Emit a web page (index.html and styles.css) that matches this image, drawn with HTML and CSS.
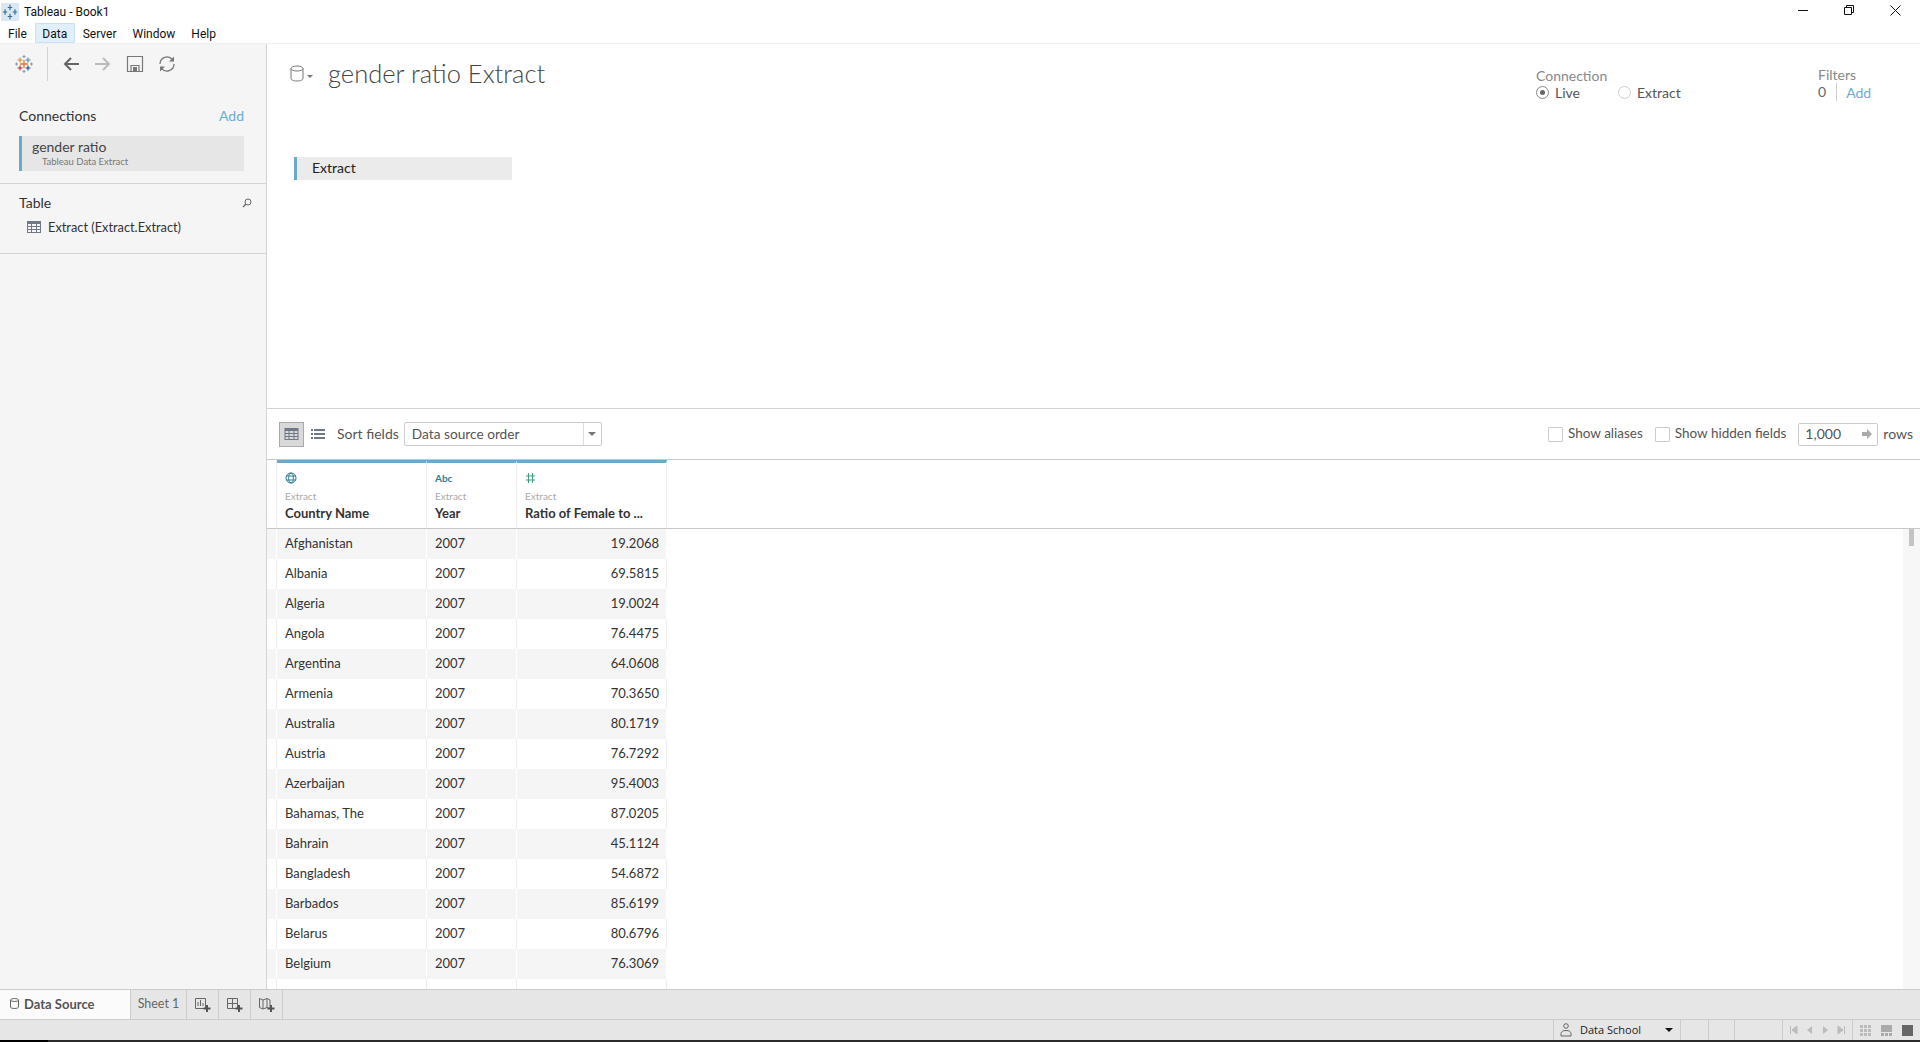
FILE: index.html
```html
<!DOCTYPE html>
<html lang="en">
<head>
<meta charset="utf-8">
<title>Tableau - Book1</title>
<link rel="stylesheet" href="styles.css">
</head>
<body>
<div class="app">
  <header class="titlebar">
    <svg class="app-icon" width="20" height="20" viewBox="0 0 20 20"><rect x="0" y="0" width="20" height="20" fill="#dbe7f1"/><path d="M10 2v6M7.500 5h5M10 12v6M7.500 15h5M4.500 7v6M2 10h5M15.500 7v6M13 10h5" stroke="#2f6f9f" stroke-width="1.300" fill="none"/></svg>
    <span class="app-title">Tableau - Book1</span>
    <div class="win-controls">
      <svg width="11" height="11" viewBox="0 0 11 11"><path d="M0 5.500h10" stroke="#111" fill="none"/></svg>
      <svg width="11" height="11" viewBox="0 0 11 11"><path d="M.5 2.500h7v7h-7zM2.500 2.500v-2h7v7h-2" stroke="#111" fill="none"/></svg>
      <svg width="11" height="11" viewBox="0 0 11 11"><path d="M.5.500l10 10M10.500.500l-10 10" stroke="#111" fill="none"/></svg>
    </div>
  </header>
  <nav class="menubar">
    <span class="menu-item">File</span>
    <span class="menu-item active">Data</span>
    <span class="menu-item">Server</span>
    <span class="menu-item">Window</span>
    <span class="menu-item">Help</span>
  </nav>
  <div class="workspace">
    <aside class="sidebar">
      <div class="toolbar">
        <svg class="logo" width="18" height="18" viewBox="0 0 18 18">
          <path d="M9 5v8M5 9h8" stroke="#e8762d" stroke-width="1.300" fill="none"/>
          <path d="M5 2.500v5M2.500 5h5" stroke="#e8862d" stroke-width="1.100" fill="none"/>
          <path d="M13 2.500v5M10.500 5h5" stroke="#5b879b" stroke-width="1.100" fill="none"/>
          <path d="M5 10.500v5M2.500 13h5" stroke="#c72035" stroke-width="1.100" fill="none"/>
          <path d="M13 10.500v5M10.500 13h5" stroke="#1f457e" stroke-width="1.100" fill="none"/>
          <path d="M9 0v3M7.500 1.500h3M1.500 7.500v3M0 9h3M16.500 7.500v3M15 9h3M9 15v3M7.500 16.500h3" stroke="#7a9cc0" stroke-width="1" fill="none"/>
        </svg>
        <span class="tool-sep"></span>
        <svg class="tool" width="18" height="18" viewBox="0 0 18 18"><path d="M17 9H3M9 3L3 9l6 6" stroke="#666" stroke-width="2" fill="none"/></svg>
        <svg class="tool" width="18" height="18" viewBox="0 0 18 18"><path d="M1 9h14M9 3l6 6-6 6" stroke="#bbb" stroke-width="2" fill="none"/></svg>
        <svg class="tool" width="18" height="18" viewBox="0 0 18 18"><path d="M1.500 1.500h15v15h-15z" stroke="#777" stroke-width="1.200" fill="none"/><path d="M5 16.500v-6h8v6" stroke="#777" stroke-width="1.200" fill="none"/><path d="M7 12h4v4.500H7z" fill="#777"/></svg>
        <svg class="tool" width="18" height="18" viewBox="0 0 18 18"><path d="M2 9a7 7 0 0 1 12.500-4.300M16 9a7 7 0 0 1-12.500 4.300" stroke="#777" stroke-width="1.300" fill="none"/><path d="M16 1.500v5h-5zM2 16.500v-5h5z" fill="#777"/></svg>
      </div>
      <section class="connections">
        <div class="side-head"><span class="side-title">Connections</span><span class="link">Add</span></div>
        <div class="conn-item">
          <div class="conn-name">gender ratio</div>
          <div class="conn-type">Tableau Data Extract</div>
        </div>
      </section>
      <section class="tables">
        <div class="side-head table-head"><span class="side-title">Table</span>
          <svg width="10" height="10" viewBox="0 0 10 10"><circle cx="6" cy="4" r="3" stroke="#666" fill="none"/><path d="M3.800 6.200L1 9" stroke="#666" stroke-width="1.300" fill="none"/></svg>
        </div>
        <div class="table-item">
          <svg width="14" height="12" viewBox="0 0 14 12"><rect width="14" height="12" fill="#6e7887"/><path d="M1 3h3v2H1zM5 3h4v2H5zM10 3h3v2h-3zM1 6h3v2H1zM5 6h4v2H5zM10 6h3v2h-3zM1 9h3v2H1zM5 9h4v2H5zM10 9h3v2h-3z" fill="#f5f5f5"/></svg>
          <span>Extract (Extract.Extract)</span>
        </div>
      </section>
    </aside>
    <main class="content">
      <section class="canvas">
        <div class="canvas-top">
          <svg class="db-icon" width="14" height="17" viewBox="0 0 14 17"><path d="M1 3.500v10c0 1.400 2.500 2.500 6 2.500s6-1.100 6-2.500v-10" stroke="#777" fill="none"/><ellipse cx="7" cy="3.500" rx="6" ry="2.500" stroke="#777" fill="none"/></svg>
          <span class="caret small"></span>
          <h1 class="ds-title">gender ratio Extract</h1>
          <div class="connection-box">
            <div class="meta-label">Connection</div>
            <div class="radio-row">
              <span class="radio on"></span><span class="radio-text first">Live</span>
              <span class="radio"></span><span class="radio-text">Extract</span>
            </div>
          </div>
          <div class="filters-box">
            <div class="meta-label">Filters</div>
            <div class="filter-row"><span class="count">0</span><span class="link">Add</span></div>
          </div>
        </div>
        <div class="extract-pill">Extract</div>
      </section>
      <section class="grid-toolbar">
        <span class="view-btn on"><svg width="15" height="12" viewBox="0 0 14 12"><rect width="14" height="12" fill="#6e7887"/><path d="M1 3h3v2H1zM5 3h4v2H5zM10 3h3v2h-3zM1 6h3v2H1zM5 6h4v2H5zM10 6h3v2h-3zM1 9h3v2H1zM5 9h4v2H5zM10 9h3v2h-3z" fill="#d9d9d9"/></svg></span>
        <span class="view-btn list"><svg width="14" height="12" viewBox="0 0 14 12"><path d="M0 1h2v2H0zM3 1h11v2H3zM0 5h2v2H0zM3 5h11v2H3zM0 9h2v2H0zM3 9h11v2H3z" fill="#6e7887"/></svg></span>
        <span class="sort-label">Sort fields</span>
        <div class="select"><span class="select-val">Data source order</span><span class="select-btn"><span class="caret"></span></span></div>
        <label class="check first-check"><span class="box"></span>Show aliases</label>
        <label class="check"><span class="box"></span>Show hidden fields</label>
        <div class="rows-input"><span class="rows-val">1,000</span><svg width="12" height="10" viewBox="0 0 12 10"><path d="M1 3h5V0l5 5-5 5V7H1z" fill="#aaa"/></svg></div>
        <span class="rows-label">rows</span>
      </section>
      <section class="grid">
        <div class="grid-head">
          <div class="gutter"></div>
          <div class="col col-a">
            <svg class="type-icon" width="12" height="12" viewBox="0 0 12 12"><circle cx="6" cy="6" r="5" stroke="#2f7d96" fill="none"/><ellipse cx="6" cy="6" rx="2.300" ry="5" stroke="#2f7d96" fill="none"/><path d="M1 4h10M1 8h10" stroke="#2f7d96" fill="none"/></svg>
            <div class="col-src">Extract</div><div class="col-name">Country Name</div>
          </div>
          <div class="col col-b">
            <span class="type-abc">Abc</span>
            <div class="col-src">Extract</div><div class="col-name">Year</div>
          </div>
          <div class="col col-c">
            <svg class="type-icon" width="11" height="12" viewBox="0 0 11 12"><path d="M3.500 1v10M7.500 1v10M1 4h9M1 8h9" stroke="#3fa07d" fill="none"/></svg>
            <div class="col-src">Extract</div><div class="col-name">Ratio of Female to ...</div>
          </div>
        </div>
        <div class="grid-body">
          <div class="grid-rows">
            <div class="row"><div class="gutter"></div><div class="cell col-a">Afghanistan</div><div class="cell col-b">2007</div><div class="cell col-c num">19.2068</div></div>
            <div class="row"><div class="gutter"></div><div class="cell col-a">Albania</div><div class="cell col-b">2007</div><div class="cell col-c num">69.5815</div></div>
            <div class="row"><div class="gutter"></div><div class="cell col-a">Algeria</div><div class="cell col-b">2007</div><div class="cell col-c num">19.0024</div></div>
            <div class="row"><div class="gutter"></div><div class="cell col-a">Angola</div><div class="cell col-b">2007</div><div class="cell col-c num">76.4475</div></div>
            <div class="row"><div class="gutter"></div><div class="cell col-a">Argentina</div><div class="cell col-b">2007</div><div class="cell col-c num">64.0608</div></div>
            <div class="row"><div class="gutter"></div><div class="cell col-a">Armenia</div><div class="cell col-b">2007</div><div class="cell col-c num">70.3650</div></div>
            <div class="row"><div class="gutter"></div><div class="cell col-a">Australia</div><div class="cell col-b">2007</div><div class="cell col-c num">80.1719</div></div>
            <div class="row"><div class="gutter"></div><div class="cell col-a">Austria</div><div class="cell col-b">2007</div><div class="cell col-c num">76.7292</div></div>
            <div class="row"><div class="gutter"></div><div class="cell col-a">Azerbaijan</div><div class="cell col-b">2007</div><div class="cell col-c num">95.4003</div></div>
            <div class="row"><div class="gutter"></div><div class="cell col-a">Bahamas, The</div><div class="cell col-b">2007</div><div class="cell col-c num">87.0205</div></div>
            <div class="row"><div class="gutter"></div><div class="cell col-a">Bahrain</div><div class="cell col-b">2007</div><div class="cell col-c num">45.1124</div></div>
            <div class="row"><div class="gutter"></div><div class="cell col-a">Bangladesh</div><div class="cell col-b">2007</div><div class="cell col-c num">54.6872</div></div>
            <div class="row"><div class="gutter"></div><div class="cell col-a">Barbados</div><div class="cell col-b">2007</div><div class="cell col-c num">85.6199</div></div>
            <div class="row"><div class="gutter"></div><div class="cell col-a">Belarus</div><div class="cell col-b">2007</div><div class="cell col-c num">80.6796</div></div>
            <div class="row"><div class="gutter"></div><div class="cell col-a">Belgium</div><div class="cell col-b">2007</div><div class="cell col-c num">76.3069</div></div>
            <div class="row"><div class="gutter"></div><div class="cell col-a"></div><div class="cell col-b"></div><div class="cell col-c num"></div></div>
          </div>
          <div class="scroll-track"><span class="scroll-thumb"></span></div>
        </div>
      </section>
    </main>
  </div>
  <div class="tabbar">
    <div class="tab tab-ds">
      <svg width="9" height="11" viewBox="0 0 9 11"><path d="M.5 2v7c0 .8 1.700 1.500 4 1.500s4-.7 4-1.500V2" stroke="#666" fill="none"/><ellipse cx="4.500" cy="2" rx="4" ry="1.500" stroke="#666" fill="none"/></svg>
      <span>Data Source</span>
    </div>
    <div class="tab tab-sheet">Sheet 1</div>
    <div class="tab tab-icon"><svg width="16" height="16" viewBox="0 0 16 16"><path d="M.5 1.500h10v10H.5z" stroke="#666" fill="none"/><path d="M3 5v4M5.500 3v6M8 6v3" stroke="#666" fill="none"/><path d="M12 8v7M8.500 11.500h7" stroke="#555" stroke-width="2" fill="none"/></svg></div>
    <div class="tab tab-icon"><svg width="16" height="16" viewBox="0 0 16 16"><path d="M.5 1.500h10v10H.5zM.5 6.500h10M5.500 1.500v10" stroke="#666" fill="none"/><path d="M12 8v7M8.500 11.500h7" stroke="#555" stroke-width="2" fill="none"/></svg></div>
    <div class="tab tab-icon"><svg width="16" height="16" viewBox="0 0 16 16"><path d="M.5 1.500L4 3l4-1.500 3 1.500v9L8 10.500 4 12 .500 10.500zM4 3v9M8 1.500v9" stroke="#666" fill="none"/><path d="M12 8v7M8.500 11.500h7" stroke="#555" stroke-width="2" fill="none"/></svg></div>
  </div>
  <footer class="statusbar">
    <div class="st-cell st-user">
      <svg width="12" height="14" viewBox="0 0 12 14"><circle cx="6" cy="3" r="2.300" stroke="#666" fill="none"/><path d="M1 13v-2.500C1 8.500 3 7.500 6 7.500s5 1 5 3V13z" stroke="#666" fill="none"/></svg>
      <span class="st-name">Data School</span><span class="caret dark"></span>
    </div>
    <div class="st-cell st-gap-a"></div>
    <div class="st-cell st-gap-b"></div>
    <div class="st-cell st-gap-c"></div>
    <div class="st-cell st-nav">
      <svg width="8" height="8" viewBox="0 0 8 8"><path d="M.5 0v8M7 0v8L2 4z" stroke="#bbb" fill="#bbb"/></svg>
      <svg width="6" height="8" viewBox="0 0 6 8"><path d="M5 0v8L0 4z" fill="#bbb"/></svg>
      <svg width="6" height="8" viewBox="0 0 6 8"><path d="M1 0v8l5-4z" fill="#bbb"/></svg>
      <svg width="8" height="8" viewBox="0 0 8 8"><path d="M7.500 0v8M1 0v8l5-4z" stroke="#bbb" fill="#bbb"/></svg>
    </div>
    <div class="st-cell st-views">
      <svg width="11" height="11" viewBox="0 0 11 11"><path d="M0 0h3v3H0zM4 0h3v3H4zM8 0h3v3H8zM0 4h3v3H0zM4 4h3v3H4zM8 4h3v3H8zM0 8h3v3H0zM4 8h3v3H4zM8 8h3v3H8z" fill="#bbb"/></svg>
      <svg width="11" height="11" viewBox="0 0 11 11"><path d="M0 0h11v7H0zM0 8h3v3H0zM4 8h3v3H4zM8 8h3v3H8z" fill="#aaa"/></svg>
      <svg width="11" height="11" viewBox="0 0 11 11"><path d="M0 0h11v11H0z" fill="#666"/></svg>
    </div>
  </footer>
  <div class="taskstrip"><span class="taskstrip-start"></span></div>
</div>
</body>
</html>
```
FILE: styles.css
```css
* { box-sizing: border-box; }
html, body { margin: 0; height: 100%; }
body { font-family: Lato, "Open Sans", sans-serif; font-size: 12px; color: #333; background: #fff; overflow: hidden; }
.app { display: flex; flex-direction: column; height: 1042px; width: 1920px; }

.titlebar { flex: none; height: 22px; display: flex; align-items: center; padding: 1px 0 0 1px; }
.app-icon { width: 18px; height: 18px; margin-right: 5px; }
.app-title { font: 12px Roboto, sans-serif; color: #111; }
.win-controls { margin-left: auto; display: flex; align-items: center; gap: 35px; padding-right: 19px; margin-top: -2px; }

.menubar { flex: none; height: 22px; display: flex; padding-top: 1px; font: 12px Roboto, sans-serif; color: #111; border-bottom: 1px solid #f0f0f0; }
.menu-item { padding: 0 8px; height: 20px; line-height: 22px; }
.menu-item.active { background: #e1effa; border: 1px solid #c9e0f5; padding: 0 6.500px; line-height: 20px; }

.workspace { flex: 1; display: flex; min-height: 0; }

.sidebar { flex: none; width: 267px; background: #f5f5f5; border-right: 1px solid #d4d4d4; display: flex; flex-direction: column; }
.toolbar { flex: none; display: flex; align-items: center; height: 36px; margin-top: 2px; padding-left: 15px; }
.logo { margin-right: 14px; }
.tool-sep { width: 1px; height: 34px; background: #d4d4d4; margin-right: 14px; }
.tool { margin-right: 14px; }
.connections { flex: none; padding: 25px 22px 0 19px; border-bottom: 1px solid #d4d4d4; height: 102px; }
.side-head { display: flex; justify-content: space-between; align-items: center; }
.side-title { font-size: 14px; color: #333; }
.link { color: #69aed4; font-size: 14px; }
.conn-item { margin-top: 12px; height: 35px; background: #e6e6e6; border-left: 3px solid #6aa9c8; padding: 2px 0 0 10px; width: 225px; }
.conn-name { font-size: 14px; line-height: 18px; color: #444; }
.conn-type { font-size: 9.500px; line-height: 11px; color: #777; padding-left: 10px; }
.tables { flex: none; padding: 10px 0 0 19px; border-bottom: 1px solid #d4d4d4; height: 70px; }
.table-head { padding-right: 14px; }
.table-item { display: flex; align-items: center; gap: 7px; margin: 8px 0 0 8px; font-size: 12.800px; color: #333; }

.content { flex: 1; min-width: 0; display: flex; flex-direction: column; }
.canvas { flex: none; height: 365px; border-bottom: 1px solid #d4d4d4; padding: 0 0 0 23px; }
.canvas-top { display: flex; height: 113px; }
.db-icon { margin: 21px 0 0 0; }
.caret { display: inline-block; width: 0; height: 0; border-left: 4px solid transparent; border-right: 4px solid transparent; border-top: 4px solid #777; }
.caret.small { border-left-width: 3px; border-right-width: 3px; border-top-width: 3px; margin: 31px 0 0 3px; }
.caret.dark { border-top-color: #111; }
.ds-title { margin: 13px 0 0 15px; font-size: 25.500px; font-weight: 300; color: #444; line-height: 32px; }
.connection-box { margin: 24px 0 0 auto; width: 282px; }
.meta-label { color: #888; font-size: 14px; line-height: 16px; }
.radio-row { display: flex; align-items: center; height: 17px; font-size: 14px; color: #555; }
.radio { width: 13px; height: 13px; border: 1px solid #ccc; border-radius: 50%; background: #fff; position: relative; }
.radio.on { border-color: #888; }
.radio.on::after { content: ""; position: absolute; left: 3px; top: 3px; width: 5px; height: 5px; border-radius: 50%; background: #666; }
.radio-text { margin-left: 6px; }
.radio-text.first { width: 63px; }
.filters-box { margin: 23px 0 0 0; width: 102px; }
.filter-row { display: flex; align-items: center; height: 18px; font-size: 14px; color: #666; }
.count { padding-right: 10px; margin-right: 9px; border-right: 1px solid #ccc; line-height: 18px; }
.extract-pill { width: 218px; height: 23px; margin-left: 4px; background: #ebebeb; border-left: 3px solid #6aa9c8; padding-left: 15px; line-height: 21px; font-size: 14px; color: #222; }

.grid-toolbar { flex: none; height: 51px; display: flex; align-items: center; padding: 0 7px 0 12px; border-bottom: 1px solid #c8c8c8; }
.view-btn { width: 25px; height: 25px; display: flex; align-items: center; justify-content: center; border: 1px solid transparent; }
.view-btn.on { background: #d9d9d9; border-color: #aaa; }
.view-btn.list { margin-left: 1px; }
.sort-label { font-size: 14px; color: #555; margin: -2px 5px 0 7px; }
.select { width: 198px; height: 24px; border: 1px solid #ccc; border-radius: 2px; display: flex; align-items: center; justify-content: space-between; font-size: 13.700px; color: #555; }
.select-val { padding-left: 7px; margin-top: -2px; }
.select-btn { width: 18px; height: 22px; border-left: 1px solid #ddd; display: flex; align-items: center; justify-content: center; }
.check { display: flex; align-items: center; font-size: 13.500px; color: #555; margin-top: -2px; }
.first-check { margin-left: auto; }
.check + .check { margin-left: 12px; }
.box { width: 15px; height: 15px; border: 1px solid #ccc; margin: 2px 5px 0 0; border-radius: 1px; }
.rows-input { width: 80px; height: 23px; margin: 0 5px 0 12px; border: 1px solid #ccc; border-radius: 2px; display: flex; align-items: center; justify-content: space-between; padding: 0 4px 0 6px; font-size: 14px; color: #555; }
.rows-val { margin-top: -2px; }
.rows-label { font-size: 14px; color: #555; margin-top: -2px; }

.grid { flex: 1; min-height: 0; display: flex; flex-direction: column; }
.grid-head { flex: none; height: 69px; display: flex; border-bottom: 1px solid #c8c8c8; }
.gutter { flex: none; width: 10px; border-right: 1px solid #eee; }
.col-a { flex: none; width: 150px; }
.col-b { flex: none; width: 90px; }
.col-c { flex: none; width: 150px; }
.col { border-top: 3px solid #6aa9c8; border-right: 1px solid #eee; padding: 9px 8px 0; }
.type-icon { display: block; height: 12px; }
.type-abc { display: block; height: 12px; line-height: 12px; font-size: 10px; font-weight: 700; color: #2f7d96; }
.col-src { font-size: 10px; line-height: 12px; color: #aaa; margin-top: 6px; }
.col-name { font-size: 13px; line-height: 16px; font-weight: 700; color: #333; margin-top: 3px; white-space: nowrap; }
.grid-body { flex: 1; min-height: 0; display: flex; }
.grid-rows { flex: 1; min-width: 0; overflow: hidden; }
.row { display: flex; width: 400px; height: 30px; }
.row:nth-child(odd) { background: #f5f5f5; }
.cell { height: 30px; line-height: 29px; padding: 0 8px; font-size: 13px; color: #333; border-right: 1px solid #eee; white-space: nowrap; }
.cell.num { text-align: right; padding-right: 7px; }
.row:nth-child(odd) .cell, .row:nth-child(odd) .gutter { border-right-color: #fff; }
.scroll-track { flex: none; width: 17px; background: #f7f7f7; padding: 0 0 0 6px; }
.scroll-thumb { display: block; width: 5px; height: 17px; background: #c4c4c4; }

.tabbar { flex: none; height: 31px; display: flex; background: #e6e6e6; border-top: 1px solid #ccc; border-bottom: 1px solid #ccc; }
.tab { height: 29px; display: flex; align-items: center; justify-content: center; border-right: 1px solid #ccc; }
.tab-ds { width: 131px; background: #fbfbfb; justify-content: flex-start; padding: 0 0 2px 10px; gap: 5px; font-size: 13px; font-weight: 700; color: #555; }
.tab-sheet { width: 56px; padding-bottom: 2px; font-size: 12.500px; color: #666; }
.tab-icon { width: 32px; }

.statusbar { flex: none; height: 20px; display: flex; justify-content: flex-end; background: #e6e6e6; }
.st-cell { height: 20px; border-left: 1px solid #ccc; display: flex; align-items: center; }
.st-user { width: 127px; padding-left: 6px; }
.st-name { font: 11px "Open Sans", sans-serif; color: #222; margin: -2px auto 0 8px; }
.st-user .caret { margin-right: 7px; }
.st-gap-a { width: 28px; }
.st-gap-b { width: 26px; }
.st-gap-c { width: 48px; }
.st-nav { width: 70px; gap: 9px; padding-left: 7px; }
.st-views { width: 68px; gap: 10px; padding-left: 7px; }
.taskstrip { flex: none; height: 2px; background: #2b2b2b; }
.taskstrip-start { display: block; width: 48px; height: 2px; background: #000; }
```
